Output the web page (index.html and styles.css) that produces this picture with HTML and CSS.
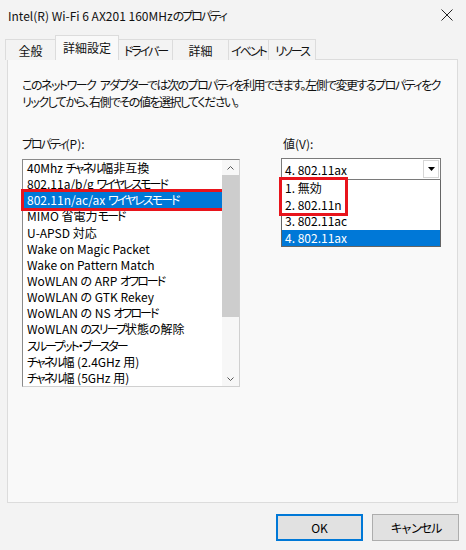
FILE: index.html
```html
<!DOCTYPE html>
<html lang="ja">
<head>
    <meta charset="UTF-8">
    <meta name="viewport" content="width=device-width, initial-scale=1.0">
    <title>Intel(R) Wi-Fi 6 AX201 160MHzのプロパティ</title>
    <link rel="stylesheet" href="styles.css">
</head>
<body>
    <div class="window">
        <div class="titlebar">
            <span class="title">Intel(R) Wi-Fi 6 AX201 160MHz<span class="kana">のプロパティ</span></span>
            <svg class="close" width="12" height="12" viewBox="0 0 12 12">
                <path d="M0.5 0.5 L11.5 11.5 M11.5 0.5 L0.5 11.5" stroke="#222" stroke-width="1" fill="none"/>
            </svg>
        </div>

        <div class="tabs">
            <div class="tab tab-general">全般</div>
            <div class="tab tab-active">詳細設定</div>
            <div class="tab tab-driver"><span class="kana">ドライバー</span></div>
            <div class="tab tab-detail">詳細</div>
            <div class="tab tab-event"><span class="kana">イベント</span></div>
            <div class="tab tab-resource"><span class="kana">リソース</span></div>
        </div>

        <div class="panel">
            <p class="desc">このネットワーク アダプターでは次のプロパティを利用できます。左側で変更するプロパティをク<br>リックしてから、右側でその値を選択してください。</p>

            <div class="fields">
                <div class="field-left">
                    <div class="label"><span class="kana">プロパティ</span>(P):</div>
                    <div class="listbox">
                        <ul class="items">
                            <li>40Mhz <span class="kana">チャネル</span>幅非互換</li>
                            <li>802.11a/b/g <span class="kana">ワイヤレスモード</span></li>
                            <li class="selected marked">802.11n/ac/ax <span class="kana">ワイヤレスモード</span></li>
                            <li>MIMO 省電力<span class="kana">モード</span></li>
                            <li>U-APSD 対応</li>
                            <li>Wake on Magic Packet</li>
                            <li>Wake on Pattern Match</li>
                            <li>WoWLAN の ARP <span class="kana">オフロード</span></li>
                            <li>WoWLAN の GTK Rekey</li>
                            <li>WoWLAN の NS <span class="kana">オフロード</span></li>
                            <li>WoWLAN <span class="kana">のスリープ</span>状態の解除</li>
                            <li><span class="kana">スループット・ブースター</span></li>
                            <li><span class="kana">チャネル</span>幅 (2.4GHz 用)</li>
                            <li><span class="kana">チャネル</span>幅 (5GHz 用)</li>
                        </ul>
                        <div class="scrollbar">
                            <div class="arrow">
                                <svg width="7" height="4" viewBox="0 0 7 4"><path d="M0.5 3.5 L3.5 0.5 L6.5 3.5" stroke="#555" fill="none"/></svg>
                            </div>
                            <div class="thumb"></div>
                            <div class="track"></div>
                            <div class="arrow">
                                <svg width="7" height="4" viewBox="0 0 7 4"><path d="M0.5 0.5 L3.5 3.5 L6.5 0.5" stroke="#555" fill="none"/></svg>
                            </div>
                        </div>
                    </div>
                </div>

                <div class="field-right">
                    <div class="label label-value">値(V):</div>
                    <div class="combo">
                        <span class="combo-text">4. 802.11ax</span>
                        <span class="combo-button">
                            <svg width="7" height="4" viewBox="0 0 7 4"><path d="M0 0 L7 0 L3.5 4 Z" fill="#000"/></svg>
                        </span>
                    </div>
                    <ul class="dropdown">
                        <li class="marked-group">
                            <div class="option">1. 無効</div>
                            <div class="option">2. 802.11n</div>
                        </li>
                        <li class="option">3. 802.11ac</li>
                        <li class="option selected">4. 802.11ax</li>
                    </ul>
                </div>
            </div>
        </div>

        <div class="buttons">
            <button class="btn btn-default">OK</button>
            <button class="btn"><span class="kana">キャンセル</span></button>
        </div>
    </div>
</body>
</html>
```

FILE: styles.css
```css
/* Global Styles */
* {
    margin: 0;
    padding: 0;
    box-sizing: border-box;
}

body {
    font-family: "Noto Sans CJK JP", "Noto Sans", sans-serif;
    font-size: 12px;
    font-feature-settings: "palt" 1;
    color: #000;
    background-color: #f3f3f3;
}

/* kana in the Windows UI font run much narrower */
.kana {
    letter-spacing: -2px;
}

.window {
    width: 466px;
    height: 550px;
    display: flex;
    flex-direction: column;
}

/* Title bar */
.titlebar {
    height: 30px;
    display: flex;
    align-items: center;
    justify-content: space-between;
    padding: 0 13px 0 8px;
}

.title {
    font-size: 12px;
    color: #111;
}

/* Tabs */
.tabs {
    height: 30px;
    display: flex;
    align-items: flex-end;
    padding-left: 5px;
    margin-bottom: -1px;
    position: relative;
    z-index: 1;
}

.tab {
    height: 21px;
    border: 1px solid #dcdcdc;
    border-bottom: none;
    background-color: #f3f3f3;
    display: flex;
    align-items: center;
    justify-content: center;
    margin-left: -1px;
    color: #111;
    white-space: nowrap;
}

.tab:first-child {
    margin-left: 0;
}

.tab-general { width: 51px; }
.tab-active {
    width: 64px;
    height: 25px;
    background-color: #f9f9f9;
    padding-bottom: 2px;
}
.tab-driver { width: 55px; }
.tab-detail { width: 57px; }
.tab-event { width: 41px; }
.tab-resource { width: 48px; }

/* Panel */
.panel {
    height: 444px;
    margin: 0 8px 0 7px;
    border: 1px solid #dcdcdc;
    background-color: #f9f9f9;
    padding: 16px 14px 0 14px;
}

.desc {
    line-height: 17px;
    color: #111;
    white-space: nowrap;
    letter-spacing: -1.5px;
    word-spacing: 3px;
}

.fields {
    display: flex;
    gap: 41px;
    margin-top: 26px;
}

.label {
    line-height: 16px;
    margin-bottom: 7px;
    color: #111;
}

.label-value {
    padding-left: 2px;
    margin-bottom: 6px;
}

/* Property list */
.field-left {
    width: 218px;
}

.listbox {
    height: 228px;
    border: 1px solid #8a8a8a;
    border-right-color: #d0d0d0;
    border-bottom-color: #d0d0d0;
    background-color: #fff;
    display: flex;
}

.items {
    list-style: none;
    flex: 1;
}

.items li {
    height: 16.15px;
    line-height: 16px;
    padding-left: 3px;
    margin-left: 1px;
    white-space: nowrap;
}

.items li.selected {
    background-color: #0078d7;
    color: #fff;
}

.marked {
    outline: 3px solid #e8141c;
    outline-offset: 0;
}

.scrollbar {
    width: 17px;
    display: flex;
    flex-direction: column;
    background-color: #f7f7f7;
}

.arrow {
    height: 15px;
    display: flex;
    align-items: center;
    justify-content: center;
}

.thumb {
    height: 142px;
    background-color: #cdcdcd;
}

.track {
    flex: 1;
}

/* Value combo */
.field-right {
    width: 160px;
}

.combo {
    height: 22px;
    border: 1px solid #7a7a7a;
    background-color: #fff;
    display: flex;
    align-items: center;
    justify-content: space-between;
    padding: 0 1px 0 3px;
}

.combo-button {
    width: 16px;
    height: 18px;
    border: 1px solid #d6d6d6;
    display: flex;
    align-items: center;
    justify-content: center;
}

.dropdown {
    list-style: none;
    border: 1px solid #646464;
    border-top: none;
    background-color: #fff;
}

.option {
    height: 16.5px;
    line-height: 16px;
    padding-left: 3px;
}

.option.selected {
    background-color: #0078d7;
    color: #fff;
}

.marked-group {
    width: 63px;
    margin-left: 0;
    outline: 3px solid #e8141c;
    outline-offset: 0;
    position: relative;
    z-index: 1;
}

/* Buttons */
.buttons {
    display: flex;
    justify-content: flex-end;
    gap: 9px;
    margin-top: 11px;
    padding-right: 7px;
}

.btn {
    width: 87px;
    height: 27px;
    font-family: inherit;
    font-size: 12px;
    background-color: #e1e1e1;
    border: 1px solid #adadad;
    color: #000;
}

.btn-default {
    border: 2px solid #0078d7;
}
```
